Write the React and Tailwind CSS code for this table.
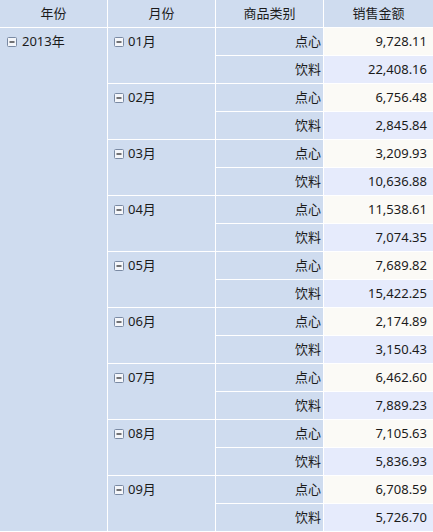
import React from 'react'

const data = [
  ['01月', '9,728.11', '22,408.16'],
  ['02月', '6,756.48', '2,845.84'],
  ['03月', '3,209.93', '10,636.88'],
  ['04月', '11,538.61', '7,074.35'],
  ['05月', '7,689.82', '15,422.25'],
  ['06月', '2,174.89', '3,150.43'],
  ['07月', '6,462.60', '7,889.23'],
  ['08月', '7,105.63', '5,836.93'],
  ['09月', '6,708.59', '5,726.70'],
]

function Minus(){
  return (
    <svg width="10" height="10" viewBox="0 0 10 10" className="shrink-0">
      <rect x="0.5" y="0.5" width="9" height="9" rx="1" fill="#f4f6fa" stroke="#7a8aa3" />
      <line x1="2.5" y1="5" x2="7.5" y2="5" stroke="#1a1a1a" strokeWidth="1.2" />
    </svg>
  )
}

export default function App(){
  return (
    <div
      className="w-[433px] h-[532px] overflow-hidden bg-white text-[13px] text-[#1b1b1b]"
      style={{ fontFamily: '"Noto Sans", "Noto Sans CJK SC", sans-serif' }}
    >
      <div className="grid grid-cols-[107px_107px_107px_1fr] grid-rows-[repeat(19,27px)] gap-px bg-white">
        <div className="bg-[#cfdcef] flex items-center justify-center">年份</div>
        <div className="bg-[#cfdcef] flex items-center justify-center">月份</div>
        <div className="bg-[#cfdcef] flex items-center justify-center">商品类别</div>
        <div className="bg-[#cfdcef] flex items-center justify-center">销售金额</div>

        <div className="bg-[#cfdcef] row-span-18 col-start-1 row-start-2">
          <div className="h-[27px] flex items-center gap-[5px] pl-[7px]">
            <Minus />
            <span>2013年</span>
          </div>
        </div>

        {data.map((d, i) => (
          <React.Fragment key={d[0]}>
            <div className="bg-[#cfdcef] row-span-2 col-start-2">
              <div className="h-[27px] flex items-center gap-[4px] pl-[6px]">
                <Minus />
                <span>{d[0]}</span>
              </div>
            </div>
            <div className="bg-[#cfdcef] col-start-3 flex items-center justify-end pr-[2px]">点心</div>
            <div className="bg-[#fbfaf6] col-start-4 flex items-center justify-end pr-[6px]">{d[1]}</div>
            <div className="bg-[#cfdcef] col-start-3 flex items-center justify-end pr-[2px]">饮料</div>
            <div className="bg-[#e6ebfc] col-start-4 flex items-center justify-end pr-[6px]">{d[2]}</div>
          </React.Fragment>
        ))}
      </div>
    </div>
  )
}
